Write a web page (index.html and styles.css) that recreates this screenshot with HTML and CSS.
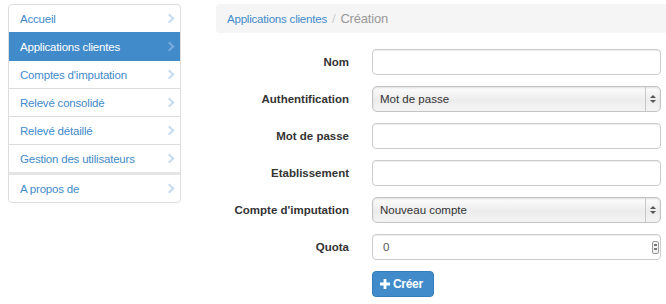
FILE: index.html
```html
<!DOCTYPE html>
<html lang="fr">
<head>
    <meta charset="UTF-8">
    <title>Création</title>
    <link rel="stylesheet" href="styles.css">
</head>
<body>
<div class="page">
    <ul class="menu">
        <li><a href="#">Accueil</a></li>
        <li class="active"><a href="#">Applications clientes</a></li>
        <li><a href="#">Comptes d'imputation</a></li>
        <li><a href="#">Relevé consolidé</a></li>
        <li><a href="#">Relevé détaillé</a></li>
        <li><a href="#">Gestion des utilisateurs</a></li>
        <li class="sep"><a href="#">A propos de</a></li>
    </ul>

    <div class="main">
        <div class="crumb">
            <a href="#">Applications clientes</a>
            <span class="slash">/</span>
            <span class="here">Création</span>
        </div>

        <form class="form">
            <label>Nom</label>
            <input type="text" class="field">

            <label>Authentification</label>
            <div class="select">
                <span>Mot de passe</span>
                <i class="arrows"></i>
            </div>

            <label>Mot de passe</label>
            <input type="password" class="field">

            <label>Etablissement</label>
            <input type="text" class="field">

            <label>Compte d'imputation</label>
            <div class="select">
                <span>Nouveau compte</span>
                <i class="arrows"></i>
            </div>

            <label>Quota</label>
            <div class="number">
                <input type="text" class="field" value="0">
                <i class="spin"></i>
            </div>

            <span></span>
            <div>
                <button type="button" class="btn">
                    <svg width="10" height="10" viewBox="0 0 10 10"><path d="M3.6 0h2.8v3.6H10v2.8H6.4V10H3.6V6.4H0V3.6h3.6z" fill="#fff"/></svg>
                    Créer
                </button>
            </div>
        </form>
    </div>
</div>
</body>
</html>
```

FILE: styles.css
```css
body {
    margin: 0;
    font-family: "Liberation Sans", Arial, sans-serif;
    font-size: 11.5px;
    color: #333;
    background: #fff;
}

div.page {
    display: flex;
    padding: 4px 0 0 8px;
    gap: 35px;
}

/* menu de gauche */
ul.menu {
    list-style: none;
    margin: 0;
    padding: 0;
    width: 171px;
    border: 1px solid #ddd;
    border-radius: 4px;
    align-self: flex-start;
    overflow: hidden;
}

ul.menu li {
    border-top: 1px solid #ddd;
}

ul.menu li:first-child {
    border-top: none;
}

ul.menu li.sep {
    border-top: 3px solid #e5e5e5;
}

ul.menu li a {
    display: flex;
    align-items: center;
    height: 27px;
    padding: 0 11px;
    color: #428bca;
    text-decoration: none;
    letter-spacing: -0.2px;
    position: relative;
}

ul.menu li a::after {
    content: "";
    position: absolute;
    right: 7px;
    top: 10px;
    width: 5px;
    height: 5px;
    border-top: 2.5px solid #c8daee;
    border-right: 2.5px solid #c8daee;
    transform: rotate(45deg);
}

ul.menu li.active {
    border-top-color: #428bca;
}

ul.menu li.active a {
    background: #428bca;
    color: #fff;
}

ul.menu li.active a::after {
    border-color: #77a9dc;
}

ul.menu li.active + li {
    border-top-color: #428bca;
}

/* partie droite */
div.main {
    flex: 1;
}

div.crumb {
    background: #f5f5f5;
    height: 29px;
    border-radius: 4px 0 0 4px;
    display: flex;
    align-items: center;
    padding-left: 11px;
    letter-spacing: -0.2px;
}

div.crumb a {
    color: #428bca;
    text-decoration: none;
}

div.crumb span.slash {
    color: #ccc;
    padding: 0 5px;
    font-size: 13px;
}

div.crumb span.here {
    color: #999;
    font-size: 13px;
    letter-spacing: -0.2px;
}

form.form {
    display: grid;
    grid-template-columns: 133px 289px;
    column-gap: 23px;
    row-gap: 11px;
    margin-top: 16px;
    align-items: center;
}

form.form label {
    text-align: right;
    font-weight: bold;
}

input.field {
    box-sizing: border-box;
    width: 289px;
    height: 26px;
    margin: 0;
    border: 1px solid #ccc;
    border-radius: 4px;
    box-shadow: inset 0 1px 1px rgba(0, 0, 0, 0.075);
    padding: 0 10px;
    font-family: inherit;
    font-size: 11.5px;
    color: #555;
    display: block;
}

div.select {
    box-sizing: border-box;
    width: 289px;
    height: 26px;
    border: 1px solid #c4c4c4;
    border-radius: 5px;
    background: linear-gradient(#fdfdfd, #ececec 55%, #f4f4f4);
    box-shadow: inset 0 1px 2px rgba(0, 0, 0, 0.12);
    display: flex;
    align-items: center;
    padding-left: 7px;
    color: #333;
    position: relative;
}

div.select i.arrows {
    position: absolute;
    right: 0;
    top: 0;
    bottom: 0;
    width: 14px;
    border-left: 1px solid #c8c8c8;
}

div.select i.arrows::before,
div.select i.arrows::after {
    content: "";
    position: absolute;
    left: 4px;
    border-left: 3px solid transparent;
    border-right: 3px solid transparent;
}

div.select i.arrows::before {
    top: 8px;
    border-bottom: 3px solid #555;
}

div.select i.arrows::after {
    top: 13px;
    border-top: 3px solid #555;
}

div.number {
    position: relative;
}

div.number i.spin {
    position: absolute;
    right: 2px;
    top: 7px;
    width: 5px;
    height: 11px;
    border: 1px solid #999;
    border-radius: 2px;
    background: #f2f2f2;
}

div.number i.spin::before,
div.number i.spin::after {
    content: "";
    position: absolute;
    left: 1px;
    width: 3px;
    height: 2px;
    background: #777;
}

div.number i.spin::before {
    top: 2px;
}

div.number i.spin::after {
    top: 6px;
}

button.btn {
    display: flex;
    align-items: center;
    gap: 3px;
    height: 26px;
    padding: 0 10px 0 7px;
    border: 1px solid #357ebd;
    border-radius: 4px;
    background: #428bca;
    color: #fff;
    font-family: inherit;
    font-size: 12px;
    font-weight: bold;
    letter-spacing: -0.3px;
}
```
